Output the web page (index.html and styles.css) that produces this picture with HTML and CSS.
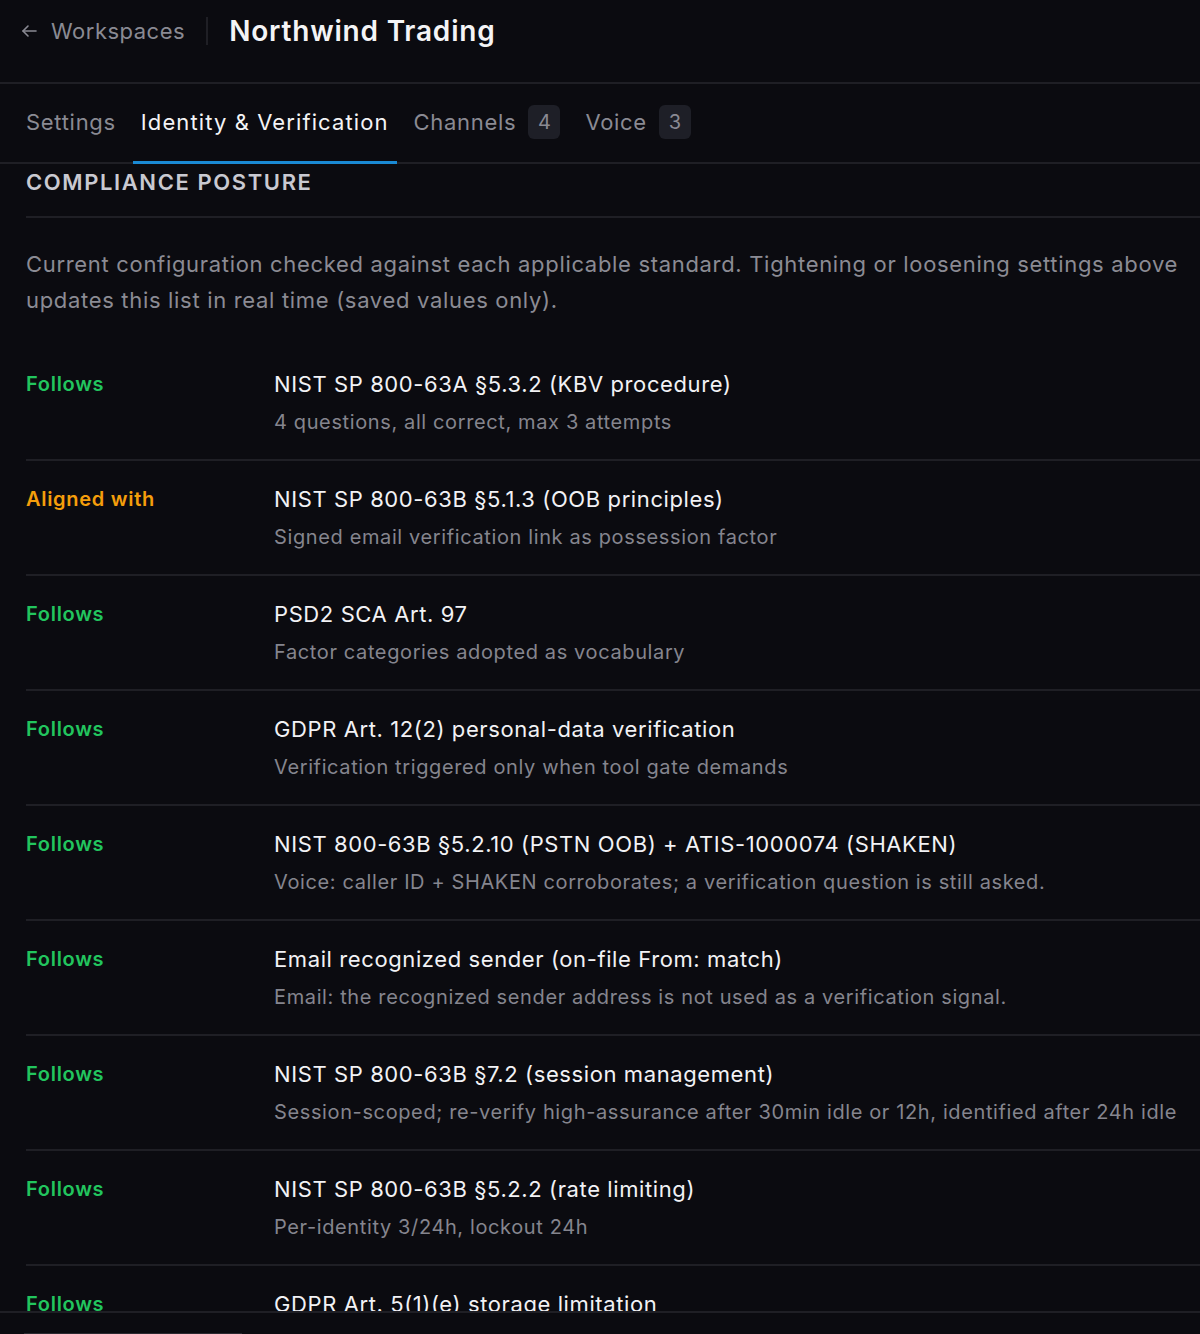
FILE: index.html
```html
<!DOCTYPE html>
<html lang="en">
<head>
    <meta charset="UTF-8">
    <title>Northwind Trading - Identity & Verification</title>
    <link rel="stylesheet" href="styles.css">
</head>
<body>
    <!-- Top bar -->
    <div class="topbar">
        <a class="back" href="#">
            <svg width="18" height="18" viewBox="0 0 18 18" fill="none" stroke="currentColor" stroke-width="1.6" stroke-linecap="round" stroke-linejoin="round">
                <path d="M16 9H3"/>
                <path d="M8 4L3 9l5 5"/>
            </svg>
            Workspaces
        </a>
        <span class="sep"></span>
        <h1>Northwind Trading</h1>
    </div>

    <!-- Tabs -->
    <div class="tabs">
        <a class="tab" href="#">Settings</a>
        <a class="tab active" href="#">Identity &amp; Verification</a>
        <a class="tab" href="#">Channels <span class="count">4</span></a>
        <a class="tab" href="#">Voice <span class="count">3</span></a>
    </div>

    <!-- Compliance posture -->
    <div class="section">
        <h2>Compliance Posture</h2>
        <p class="intro">Current configuration checked against each applicable standard. Tightening or loosening settings above updates this list in real time (saved values only).</p>

        <ul class="posture">
            <li>
                <span class="status ok">Follows</span>
                <div>
                    <div class="std">NIST SP 800-63A §5.3.2 (KBV procedure)</div>
                    <div class="note">4 questions, all correct, max 3 attempts</div>
                </div>
            </li>
            <li>
                <span class="status aligned">Aligned with</span>
                <div>
                    <div class="std">NIST SP 800-63B §5.1.3 (OOB principles)</div>
                    <div class="note">Signed email verification link as possession factor</div>
                </div>
            </li>
            <li>
                <span class="status ok">Follows</span>
                <div>
                    <div class="std">PSD2 SCA Art. 97</div>
                    <div class="note">Factor categories adopted as vocabulary</div>
                </div>
            </li>
            <li>
                <span class="status ok">Follows</span>
                <div>
                    <div class="std">GDPR Art. 12(2) personal-data verification</div>
                    <div class="note">Verification triggered only when tool gate demands</div>
                </div>
            </li>
            <li>
                <span class="status ok">Follows</span>
                <div>
                    <div class="std">NIST 800-63B §5.2.10 (PSTN OOB) + ATIS-1000074 (SHAKEN)</div>
                    <div class="note">Voice: caller ID + SHAKEN corroborates; a verification question is still asked.</div>
                </div>
            </li>
            <li>
                <span class="status ok">Follows</span>
                <div>
                    <div class="std">Email recognized sender (on-file From: match)</div>
                    <div class="note">Email: the recognized sender address is not used as a verification signal.</div>
                </div>
            </li>
            <li>
                <span class="status ok">Follows</span>
                <div>
                    <div class="std">NIST SP 800-63B §7.2 (session management)</div>
                    <div class="note">Session-scoped; re-verify high-assurance after 30min idle or 12h, identified after 24h idle</div>
                </div>
            </li>
            <li>
                <span class="status ok">Follows</span>
                <div>
                    <div class="std">NIST SP 800-63B §5.2.2 (rate limiting)</div>
                    <div class="note">Per-identity 3/24h, lockout 24h</div>
                </div>
            </li>
            <li>
                <span class="status ok">Follows</span>
                <div>
                    <div class="std">GDPR Art. 5(1)(e) storage limitation</div>
                    <div class="note">Verification records kept only as long as needed</div>
                </div>
            </li>
        </ul>
    </div>

    <!-- Save bar -->
    <div class="savebar">
        <div class="savebar-btn"></div>
    </div>
</body>
</html>
```

FILE: styles.css
```css
body {
    margin: 0;
    background-color: #0b0b10;
    color: #f2f2f5;
    font-family: Inter, 'Noto Sans', sans-serif;
    overflow: hidden;
}
a {
    text-decoration: none;
    color: inherit;
}
/* Top bar */
.topbar {
    display: flex;
    align-items: center;
    height: 62px;
    padding: 0 20px 20px;
    border-bottom: 2px solid #1f1f25;
}
.back {
    display: flex;
    align-items: center;
    gap: 13px;
    font-size: 22px;
    letter-spacing: 0.5px;
    color: #8a8a93;
}
.sep {
    width: 2px;
    height: 28px;
    margin: 0 21px;
    background-color: #1f1f25;
}
.topbar h1 {
    margin: 0;
    font-size: 28px;
    font-weight: 600;
    letter-spacing: 0.8px;
    color: #f4f4f6;
}
/* Tabs */
.tabs {
    display: flex;
    gap: 9px;
    height: 78px;
    padding-left: 18px;
    border-bottom: 2px solid #1f1f25;
}
.tab {
    display: flex;
    align-items: center;
    gap: 12px;
    height: 30px;
    padding: 23px 8px 24px;
    border-bottom: 3px solid transparent;
    margin-bottom: -2px;
    font-size: 22px;
    letter-spacing: 0.7px;
    color: #8a8a93;
}
.tab.active {
    color: #f4f4f6;
    letter-spacing: 1.1px;
    border-bottom-color: #1a8ad4;
}
.count {
    display: inline-flex;
    align-items: center;
    justify-content: center;
    width: 32px;
    height: 34px;
    border-radius: 6px;
    background-color: #1e1f27;
    font-size: 20px;
    letter-spacing: 0;
    color: #8a8a93;
}
/* Section */
.section {
    padding-left: 26px;
}
.section h2 {
    margin: 3px 0 0;
    padding-bottom: 19px;
    border-bottom: 2px solid #1f1f25;
    font-size: 22px;
    line-height: 30px;
    font-weight: 600;
    letter-spacing: 1.6px;
    text-transform: uppercase;
    color: #c9c9d1;
}
.intro {
    margin: 28px 20px 28px 0;
    font-size: 22px;
    line-height: 36px;
    letter-spacing: 0.68px;
    color: #8b8b94;
}
.posture {
    list-style: none;
    margin: 0;
    padding: 0;
}
.posture li {
    display: flex;
    padding: 23px 0 22px;
    border-bottom: 2px solid #1f1f25;
}
.status {
    flex: 0 0 248px;
    font-size: 20px;
    line-height: 30px;
    font-weight: 600;
    letter-spacing: 0.7px;
}
.status.ok {
    color: #22c55e;
}
.status.aligned {
    color: #f59e0b;
}
.std {
    font-size: 22px;
    line-height: 30px;
    letter-spacing: 0.6px;
    color: #f2f2f5;
}
.note {
    margin-top: 8px;
    font-size: 20px;
    line-height: 30px;
    letter-spacing: 0.62px;
    color: #85858e;
}
/* Save bar */
.savebar {
    position: fixed;
    left: 0;
    right: 0;
    bottom: 0;
    height: 23px;
    padding: 20px 0 0 24px;
    border-top: 2px solid #1f1f25;
    background-color: #0b0b10;
    box-sizing: border-box;
}
.savebar-btn {
    width: 218px;
    height: 20px;
    border-top: 1px solid #2a2a31;
}
```
